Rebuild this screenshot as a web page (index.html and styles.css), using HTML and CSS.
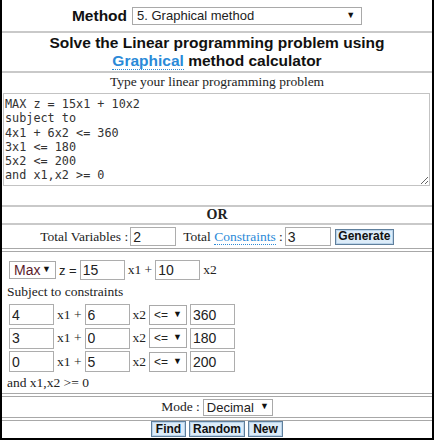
FILE: index.html
```html
<!DOCTYPE html>
<html lang="en">
<head>
  <meta charset="UTF-8">
  <meta name="viewport" content="width=device-width, initial-scale=1.0">
  <title>Graphical method calculator</title>
  <link rel="stylesheet" href="styles.css">
</head>
<body>
  <div class="calc">
    <!-- Method picker -->
    <div class="row method-row">
      <span class="method-label">Method</span>
      <span class="pick pick-method">
        <select>
          <option>5. Graphical method</option>
        </select>
      </span>
    </div>

    <div class="row title">
      Solve the Linear programming problem using<br>
      <span class="term">Graphical</span> method calculator
    </div>

    <!-- Free text problem -->
    <div class="row prompt">
      <div class="prompt-text">Type your linear programming problem</div>
      <textarea class="problem" spellcheck="false">MAX z = 15x1 + 10x2
subject to
4x1 + 6x2 &lt;= 360
3x1 &lt;= 180
5x2 &lt;= 200
and x1,x2 &gt;= 0</textarea>
    </div>

    <div class="row or">OR</div>

    <div class="row totals">
      <span>Total Variables :</span>
      <input class="num" type="text" value="2">
      <span class="gap-left">Total <span class="term">Constraints</span> :</span>
      <input class="num" type="text" value="3">
      <button class="btn btn-generate">Generate</button>
    </div>

    <!-- Generated problem table -->
    <div class="row double problem-grid">
      <div class="line objective">
        <span class="pick pick-type">
          <select>
            <option>Max</option>
          </select>
        </span>
        <span class="sans">z =</span>
        <input class="num" type="text" value="15">
        <span>x1 +</span>
        <input class="num" type="text" value="10">
        <span>x2</span>
      </div>
      <div class="line text-line">Subject to constraints</div>
      <div class="constraints" id="constraints"></div>
      <div class="line end-line">and x1,x2 &gt;= 0</div>
    </div>

    <div class="row double mode-row">
      <span>Mode :</span>
      <span class="pick pick-mode">
        <select>
          <option>Decimal</option>
        </select>
      </span>
    </div>

    <div class="row double actions">
      <button class="btn btn-find">Find</button>
      <button class="btn btn-random">Random</button>
      <button class="btn btn-new">New</button>
    </div>
  </div>

  <script>
    // constraint rows: coefficients of x1, x2, sign and right hand side
    const rows = [
      [4, 6, '<=', 360],
      [3, 0, '<=', 180],
      [0, 5, '<=', 200]
    ];

    const box = document.getElementById('constraints');
    rows.forEach(r => {
      const line = document.createElement('div');
      line.className = 'line constraint';
      line.innerHTML = `
        <input class="num" type="text" value="${r[0]}">
        <span>x1 +</span>
        <input class="num" type="text" value="${r[1]}">
        <span>x2</span>
        <span class="pick pick-sign"><select><option>${r[2].replace('<', '&lt;')}</option></select></span>
        <input class="num" type="text" value="${r[3]}">
      `;
      box.appendChild(line);
    });
  </script>
</body>
</html>
```

FILE: styles.css
```css
body {
  margin: 0;
  font-family: "Liberation Serif", "Times New Roman", serif;
  font-size: 13.5px;
  color: #222;
  background: #fff;
}
.calc {
  width: 434px;
  height: 440px;
  box-sizing: border-box;
  border-left: 2px solid #000;
  border-right: 2px solid #000;
  border-bottom: 2px solid #000;
  overflow: hidden;
}
.row {
  border-top: 2px solid #c9c9c9;
}
.row:first-child {
  border-top: none;
}
.row.double {
  border-top: 4px double #a8a8a8;
}

/* method */
.method-row {
  height: 31px;
  display: flex;
  align-items: center;
  justify-content: center;
  gap: 5px;
}
.method-label {
  font-family: "Liberation Sans", Arial, sans-serif;
  font-weight: bold;
  font-size: 15.5px;
  color: #111;
}

/* fake native selects */
.pick {
  position: relative;
  display: inline-block;
}
.pick select {
  appearance: none;
  -webkit-appearance: none;
  display: block;
  box-sizing: border-box;
  height: 18px;
  border: 1px solid #a9a9a9;
  background: #fff;
  font-family: "Liberation Sans", Arial, sans-serif;
  font-size: 13px;
  color: #222;
  padding: 0 4px;
  border-radius: 0;
  outline: none;
}
.pick::after {
  content: "\25BC";
  position: absolute;
  right: 5px;
  top: 3px;
  font-size: 9px;
  color: #111;
  pointer-events: none;
}
.pick-method select {
  width: 230px;
}
.pick-method::after {
  right: 7px;
}
.pick-type select {
  width: 47px;
  color: #5c1b2b;
  font-size: 14px;
}
.pick-sign select {
  width: 38px;
  height: 20px;
  font-size: 12px;
}
.pick-sign::after {
  top: 4px;
}
.pick-mode select {
  width: 70px;
  height: 17px;
  font-size: 13px;
  padding-left: 3px;
}
.pick-mode::after {
  top: 2px;
  right: 4px;
}

/* title */
.title {
  padding: 1px 0;
  line-height: 18px;
  text-align: center;
  font-family: "Liberation Sans", Arial, sans-serif;
  font-weight: bold;
  font-size: 15.5px;
  color: #111;
}
.term {
  color: #2b8ad8;
  border-bottom: 1px dotted #2b8ad8;
}

/* free text */
.prompt {
  padding-bottom: 19px;
}
.prompt-text {
  text-align: center;
  line-height: 17px;
}
.problem {
  display: block;
  box-sizing: border-box;
  width: 427px;
  height: 93px;
  margin: 3px 0 0 1px;
  padding: 3px 1px 2px;
  border: 1px solid #c3c3c3;
  font-family: "DejaVu Sans Mono", "Liberation Mono", monospace;
  font-size: 11.8px;
  line-height: 14.3px;
  color: #333;
  outline: none;
}

.or {
  height: 16px;
  line-height: 16px;
  text-align: center;
  font-weight: bold;
  font-size: 14px;
}

/* totals */
.totals {
  height: 23px;
  display: flex;
  align-items: center;
  justify-content: center;
  gap: 2px;
}
.gap-left {
  margin-left: 5px;
}
.num {
  box-sizing: border-box;
  width: 46px;
  height: 20px;
  border: 1px solid #adadad;
  padding: 0 2px;
  font-family: "Liberation Sans", Arial, sans-serif;
  font-size: 14px;
  color: #222;
  outline: none;
}
.totals .num {
  height: 19px;
}

.btn {
  box-sizing: border-box;
  height: 16px;
  padding: 0;
  border: 1px solid #5f7f9c;
  box-shadow: inset 0 0 0 1px #b9d3ea;
  background: #dcecf9;
  font-family: "Liberation Sans", Arial, sans-serif;
  font-weight: bold;
  font-size: 12px;
  line-height: 13px;
  color: #111;
  border-radius: 0;
  text-align: center;
}
.btn-generate {
  width: 59px;
  margin-left: 2px;
}

/* generated grid */
.problem-grid {
  padding: 6px 0 0 5px;
}
.line {
  display: flex;
  align-items: center;
  gap: 3px;
}
.objective {
  height: 24px;
  padding-left: 2px;
}
.objective .num {
  width: 45px;
}
.sans {
  font-family: "Liberation Sans", Arial, sans-serif;
  font-size: 13px;
}
.text-line {
  height: 20px;
}
.constraints {
  margin-top: 1px;
}
.constraint {
  height: 23.5px;
  padding-left: 2px;
}
.constraint .num {
  width: 45px;
  height: 21px;
}
.end-line {
  height: 19.5px;
}

.mode-row {
  height: 20px;
  display: flex;
  align-items: center;
  justify-content: center;
  gap: 3px;
}

.actions {
  height: 16px;
  display: flex;
  justify-content: center;
  gap: 3px;
}
.btn-find {
  width: 35px;
}
.btn-random {
  width: 56px;
}
.btn-new {
  width: 35px;
}
```
